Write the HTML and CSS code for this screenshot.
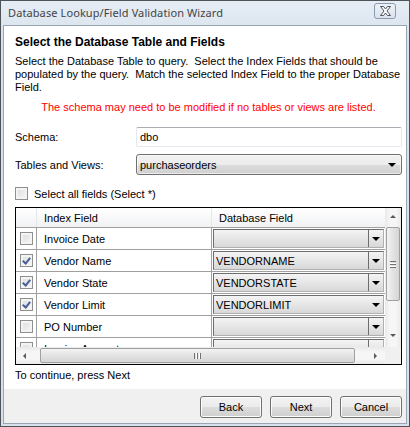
FILE: index.html
```html
<!DOCTYPE html>
<html lang="en">
<head>
  <meta charset="UTF-8" />
  <title>Database Lookup/Field Validation Wizard</title>
  <link rel="stylesheet" href="styles.css">
</head>
<body>
  <div class="window">
    <div class="titlebar">
      <span class="title">Database Lookup/Field Validation Wizard</span>
      <button class="close">
        <svg width="13" height="10" viewBox="0 0 13 10">
          <path d="M1.5 0.5 L4.5 0.5 L6.5 3 L8.5 0.5 L11.5 0.5 L8 5 L11.5 9.5 L8.5 9.5 L6.5 7 L4.5 9.5 L1.5 9.5 L5 5 Z" fill="#fff" stroke="#4d5460" stroke-width="1" stroke-linejoin="round"/>
        </svg>
      </button>
    </div>

    <div class="client">
      <div class="main">
        <div class="heading">Select the Database Table and Fields</div>
        <p class="desc">Select the Database Table to query.&nbsp; Select the Index Fields that should be populated by the query.&nbsp; Match the selected Index Field to the proper Database Field.</p>
        <p class="warning">The schema may need to be modified if no tables or views are listed.</p>

        <div class="form-row">
          <label>Schema:</label>
          <div class="textbox">dbo</div>
        </div>
        <div class="form-row tables">
          <label>Tables and Views:</label>
          <div class="dropdown">
            <span>purchaseorders</span>
            <span class="arrow"></span>
          </div>
        </div>

        <div class="select-all">
          <span class="check"></span>
          <span>Select all fields (Select *)</span>
        </div>

        <div class="grid">
          <div class="grid-main">
            <div class="grid-view">
              <div class="row header">
                <div class="cell sel"></div>
                <div class="cell index">Index Field</div>
                <div class="cell field">Database Field</div>
              </div>
              <div class="row">
                <div class="cell sel"><span class="check"></span></div>
                <div class="cell index">Invoice Date</div>
                <div class="cell field"><div class="combo"><span></span><span class="btn"><span class="arrow"></span></span></div></div>
              </div>
              <div class="row">
                <div class="cell sel"><span class="check on"></span></div>
                <div class="cell index">Vendor Name</div>
                <div class="cell field"><div class="combo"><span>VENDORNAME</span><span class="btn"><span class="arrow"></span></span></div></div>
              </div>
              <div class="row">
                <div class="cell sel"><span class="check on"></span></div>
                <div class="cell index">Vendor State</div>
                <div class="cell field"><div class="combo"><span>VENDORSTATE</span><span class="btn"><span class="arrow"></span></span></div></div>
              </div>
              <div class="row">
                <div class="cell sel"><span class="check on"></span></div>
                <div class="cell index">Vendor Limit</div>
                <div class="cell field"><div class="combo flat"><span>VENDORLIMIT</span><span class="btn"><span class="arrow"></span></span></div></div>
              </div>
              <div class="row">
                <div class="cell sel"><span class="check"></span></div>
                <div class="cell index">PO Number</div>
                <div class="cell field"><div class="combo"><span></span><span class="btn"><span class="arrow"></span></span></div></div>
              </div>
              <div class="row">
                <div class="cell sel"><span class="check"></span></div>
                <div class="cell index">Invoice Amount</div>
                <div class="cell field"><div class="combo"><span></span><span class="btn"><span class="arrow"></span></span></div></div>
              </div>
            </div>
            <div class="vscroll">
              <span class="sb-arrow up"></span>
              <div class="vtrack">
                <div class="vthumb"><span class="grip"></span></div>
              </div>
              <span class="sb-arrow down"></span>
            </div>
          </div>
          <div class="hscroll">
            <span class="sb-arrow left"></span>
            <div class="htrack">
              <div class="hthumb"><span class="grip"></span></div>
            </div>
            <span class="sb-arrow right"></span>
            <div class="corner"></div>
          </div>
        </div>

        <p class="hint">To continue, press Next</p>
      </div>

      <div class="footer">
        <button class="push">Back</button>
        <button class="push">Next</button>
        <button class="push">Cancel</button>
      </div>
    </div>
  </div>
</body>
</html>
```

FILE: styles.css
```css
body {
  margin: 0;
  font-family: "Liberation Sans", Arial, sans-serif;
  font-size: 11px;
  color: #000;
}

.window {
  width: 410px;
  height: 427px;
  box-sizing: border-box;
  border: 1px solid #4f5256;
  background: linear-gradient(#e6edf5, #d7e1ec 40px, #d7e1ec);
  padding: 0 2px 2px;
  display: flex;
  flex-direction: column;
}

.titlebar {
  height: 24px;
  display: flex;
  align-items: center;
  justify-content: space-between;
  flex-shrink: 0;
}

.title {
  font-family: "Noto Sans", sans-serif;
  font-size: 11px;
  letter-spacing: 0.1px;
  color: #444;
  padding-left: 5px;
  padding-bottom: 1px;
}

.close {
  width: 22px;
  height: 16px;
  margin-right: 11px;
  margin-bottom: 4px;
  padding: 0;
  border: 1px solid #8d9bb0;
  border-radius: 3px;
  background: linear-gradient(#eef2f7, #dae2ec);
  display: flex;
  align-items: center;
  justify-content: center;
}

.client {
  flex: 1;
  border: 1px solid #9aa6b4;
  background: #fff;
  display: flex;
  flex-direction: column;
}

.main {
  flex: 1;
  padding: 9px 4px 0 11px;
}

.heading {
  font-weight: bold;
  font-size: 12px;
  line-height: 15px;
}

.desc {
  margin: 5px 0 0;
  line-height: 13px;
}

.warning {
  margin: 7px 0 0;
  line-height: 13px;
  color: #ff0000;
  text-align: center;
}

.form-row {
  display: flex;
  align-items: center;
  margin-top: 13px;
}

.form-row.tables {
  margin-top: 7px;
}

.form-row label {
  width: 121px;
}

.textbox {
  flex: 1;
  height: 20px;
  box-sizing: border-box;
  border: 1px solid #e3e9ef;
  border-top-color: #abadb3;
  border-radius: 2px;
  padding: 3px 3px;
  line-height: 13px;
}

.dropdown {
  flex: 1;
  height: 21px;
  box-sizing: border-box;
  border: 1px solid #707070;
  border-radius: 3px;
  background: linear-gradient(#f2f2f2, #ebebeb 50%, #dddddd 50%, #cfcfcf);
  box-shadow: inset 0 0 0 1px rgba(255, 255, 255, 0.6);
  display: flex;
  align-items: center;
  justify-content: space-between;
  padding: 0 5px 0 3px;
}

.arrow {
  width: 0;
  height: 0;
  border-left: 4px solid transparent;
  border-right: 4px solid transparent;
  border-top: 4px solid #000;
}

.select-all {
  display: flex;
  align-items: center;
  gap: 6px;
  margin-top: 12px;
  height: 13px;
}

.check {
  width: 13px;
  height: 13px;
  box-sizing: border-box;
  border: 1px solid #8e8f8f;
  background: linear-gradient(135deg, #dcdcdc, #f6f6f6);
  box-shadow: inset 0 0 0 2px #f4f4f4;
  display: inline-block;
  position: relative;
}

.check.on::after {
  content: "";
  position: absolute;
  left: 3px;
  top: 1px;
  width: 3px;
  height: 6px;
  border-right: 2px solid #4a5f97;
  border-bottom: 2px solid #4a5f97;
  transform: rotate(40deg);
}

.grid {
  margin-top: 7px;
  height: 158px;
  box-sizing: border-box;
  border: 1px solid #000;
  display: flex;
  flex-direction: column;
}

.grid-main {
  flex: 1;
  display: flex;
  overflow: hidden;
}

.grid-view {
  flex: 1;
  overflow: hidden;
}

.row {
  display: flex;
  height: 22px;
  box-sizing: border-box;
  border-bottom: 1px solid #a0a0a0;
}

.row.header {
  height: 20px;
  background: linear-gradient(#ffffff, #f1f2f4);
  border-bottom-color: #a0a0a0;
}

.cell {
  display: flex;
  align-items: center;
  box-sizing: border-box;
  border-right: 1px solid #a0a0a0;
}

.header .cell {
  border-right-color: #e3e6ea;
}

.cell.sel {
  width: 21px;
  justify-content: center;
}

.cell.index {
  width: 175px;
  padding-left: 7px;
}

.cell.field {
  flex: 1;
  border-right: none;
  padding: 1px 1px 0 1px;
  align-items: stretch;
}

.header .cell.field {
  padding: 0 0 0 7px;
  align-items: center;
}

.combo {
  flex: 1;
  height: 19px;
  box-sizing: border-box;
  border: 1px solid #b0b0b0;
  border-top-color: #6d6d6d;
  border-left-color: #6d6d6d;
  background: linear-gradient(#f4f4f4, #e6e6e6 50%, #d8d8d8);
  display: flex;
  align-items: center;
  justify-content: space-between;
  padding-left: 2px;
}

.combo .btn {
  width: 14px;
  height: 100%;
  border-left: 1px solid #6d6d6d;
  display: flex;
  align-items: center;
  justify-content: center;
}

.combo.flat .btn {
  border-left-color: transparent;
}

.vscroll {
  width: 16px;
  background: linear-gradient(90deg, #e9e9e9, #f6f6f6 30%, #f6f6f6 70%, #e9e9e9);
  display: flex;
  flex-direction: column;
  align-items: center;
}

.vtrack {
  flex: 1;
  width: 100%;
  padding: 4px 1px 0;
  box-sizing: border-box;
}

.vthumb {
  height: 74px;
  box-sizing: border-box;
  border: 1px solid #a0a0a0;
  border-radius: 2px;
  background: linear-gradient(90deg, #f3f3f3, #e3e3e3 50%, #d6d6d6);
  display: flex;
  align-items: center;
  justify-content: center;
}

.vthumb .grip {
  width: 6px;
  height: 7px;
  background: repeating-linear-gradient(#727272 0 1px, transparent 1px 2px, #fff 2px 3px);
}

.sb-arrow {
  width: 0;
  height: 0;
  flex-shrink: 0;
}

.sb-arrow.up {
  margin: 7px 0 5px;
  border-left: 3px solid transparent;
  border-right: 3px solid transparent;
  border-bottom: 3px solid #595959;
}

.sb-arrow.down {
  margin: 5px 0 10px;
  border-left: 3px solid transparent;
  border-right: 3px solid transparent;
  border-top: 3px solid #595959;
}

.hscroll {
  height: 17px;
  flex-shrink: 0;
  display: flex;
  align-items: center;
  background: linear-gradient(#e9e9e9, #f6f6f6 30%, #f6f6f6 70%, #e9e9e9);
}

.sb-arrow.left {
  margin: 0 5px 0 7px;
  border-top: 3px solid transparent;
  border-bottom: 3px solid transparent;
  border-right: 3px solid #595959;
}

.sb-arrow.right {
  margin: 0 8px 0 6px;
  border-top: 3px solid transparent;
  border-bottom: 3px solid transparent;
  border-left: 3px solid #595959;
}

.htrack {
  flex: 1;
  height: 100%;
  padding: 1px 0;
  box-sizing: border-box;
  display: flex;
}

.hthumb {
  width: 315px;
  margin-left: 9px;
  box-sizing: border-box;
  border: 1px solid #a0a0a0;
  border-radius: 2px;
  background: linear-gradient(#f3f3f3, #e3e3e3 50%, #d6d6d6);
  display: flex;
  align-items: center;
  justify-content: center;
}

.hthumb .grip {
  width: 7px;
  height: 6px;
  background: repeating-linear-gradient(90deg, #727272 0 1px, transparent 1px 2px, #fff 2px 3px);
}

.corner {
  width: 16px;
  height: 100%;
  background: #f0f0f0;
}

.hint {
  margin: 4px 0 0;
  line-height: 13px;
}

.footer {
  height: 34px;
  flex-shrink: 0;
  background: #f0f0f0;
  display: flex;
  justify-content: flex-end;
  align-items: center;
  gap: 8px;
  padding-right: 4px;
}

.push {
  width: 62px;
  height: 22px;
  font-family: "Liberation Sans", Arial, sans-serif;
  font-size: 11px;
  color: #000;
  border: 1px solid #707070;
  border-radius: 3px;
  background: linear-gradient(#f2f2f2, #ebebeb 50%, #dddddd 50%, #cfcfcf);
  box-shadow: inset 0 0 0 1px #fcfcfc;
  padding: 0;
  margin-top: 1px;
}
```
